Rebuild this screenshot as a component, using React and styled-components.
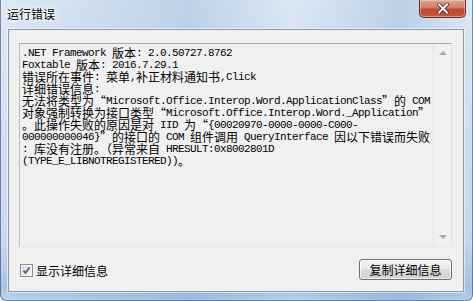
import styled, { createGlobalStyle } from 'styled-components'

const GlobalStyle = createGlobalStyle`
  html, body {
    margin: 0;
    padding: 0;
    overflow: hidden;
    background: #ffffff;
  }
`

const Window = styled.div`
  width: 473px;
  height: 301px;
  box-sizing: border-box;
  display: flex;
  flex-direction: column;
  border: 1px solid rgba(40, 60, 90, 0.55);
  border-top: none;
  border-radius: 0 0 6px 6px;
  background:
    linear-gradient(90deg, rgba(255,255,255,0.25) 0%, rgba(150,180,215,0.35) 40%, rgba(255,255,255,0.2) 62%, rgba(140,170,210,0.3) 85%, rgba(255,255,255,0.2) 100%),
    linear-gradient(180deg, #d3e1f1 0%, #c6d8ed 40%, #b7cde8 80%, #8fb0da 96%, #a9c3e3 100%);
  font-family: "Noto Sans CJK SC", "Liberation Sans", sans-serif;
`

const TitleBar = styled.div`
  height: 29px;
  flex: none;
  display: flex;
  justify-content: space-between;
  align-items: flex-start;
`

const Title = styled.div`
  padding: 6px 0 0 6px;
  font-size: 12px;
  line-height: 16px;
  color: #000;
  text-shadow: 0 0 6px #fff, 0 0 4px #fff, 0 0 2px #fff;
`

const CloseButton = styled.div`
  width: 45px;
  height: 17px;
  margin-right: 6px;
  display: flex;
  align-items: center;
  justify-content: center;
  border: 1px solid #6b2a24;
  border-top: none;
  border-radius: 0 0 5px 5px;
  background: linear-gradient(180deg, #e0a595 0%, #d27b68 45%, #c04a33 55%, #c7553b 100%);
  box-shadow: inset 0 0 0 1px rgba(255, 220, 210, 0.45);
`

const Client = styled.div`
  flex: 1;
  margin: 0 8px 8px 7px;
  display: flex;
  flex-direction: column;
  padding: 13px 11px 11px 10px;
  background: #f0f0f0;
  border: 1px solid #8a9aae;
  box-shadow: 0 0 0 1px rgba(255, 255, 255, 0.55);
`

const TextBox = styled.div`
  height: 204px;
  box-sizing: border-box;
  display: flex;
  border: 1px solid;
  border-color: #a3a6ab #dfe2e7 #e3e6ea #b8bbc0;
  background: #f0f0f0;
`

const TextContent = styled.div`
  flex: 1;
  padding: 3px 0 0 2px;
  color: #000;
`

const Line = styled.div`
  height: 12px;
  display: flex;
  align-items: center;
  white-space: pre;
`

const Latin = styled.span`
  font-family: "Liberation Mono", "DejaVu Sans Mono", monospace;
  font-size: 11px;
  letter-spacing: -0.6px;
  line-height: 12px;
`

const Cjk = styled.span`
  font-family: "Noto Sans CJK SC", sans-serif;
  font-size: 12px;
  line-height: 12px;
`

const Quote = styled.span`
  display: inline-block;
  width: 12px;
  font-family: "Noto Sans CJK SC", sans-serif;
  font-size: 12px;
  line-height: 12px;
  text-align: ${p => (p.$open ? 'right' : 'left')};
`

const ScrollBar = styled.div`
  width: 17px;
  display: flex;
  flex-direction: column;
  justify-content: space-between;
  align-items: center;
  padding: 7px 0 7px;
  border-left: 1px solid #e4e4e4;
  background: #f1f1f1;
`

const Arrow = styled.div`
  width: 0;
  height: 0;
  border-left: 4px solid transparent;
  border-right: 4px solid transparent;
  ${p => (p.$down
    ? 'border-top: 4px solid #a8a8a8;'
    : 'border-bottom: 4px solid #a8a8a8;')}
`

const Footer = styled.div`
  margin-top: 12px;
  height: 21px;
  display: flex;
  justify-content: space-between;
  align-items: center;
`

const CheckLabel = styled.label`
  display: flex;
  align-items: center;
  gap: 3px;
  padding: 1px 0 0 1px;
  font-size: 12px;
  color: #000;
`

const CheckBox = styled.span`
  width: 11px;
  height: 11px;
  display: flex;
  align-items: center;
  justify-content: center;
  border: 1px solid #8f8f8f;
  background: linear-gradient(135deg, #d6d6d6 0%, #f2f2f2 80%);
  box-shadow: inset 0 0 0 1px #f4f4f4;
`

const Button = styled.div`
  width: 91px;
  height: 19px;
  display: flex;
  align-items: center;
  justify-content: center;
  border: 1px solid #707070;
  border-radius: 3px;
  background: linear-gradient(180deg, #f2f2f2 0%, #ebebeb 49%, #dddddd 50%, #cfcfcf 100%);
  box-shadow: inset 0 0 0 1px rgba(255, 255, 255, 0.7);
  font-size: 12px;
  color: #000;
`

const lines = [
  '.NET Framework 版本: 2.0.50727.8762',
  'Foxtable 版本: 2016.7.29.1',
  '错误所在事件: 菜单,补正材料通知书,Click',
  '详细错误信息:',
  '无法将类型为“Microsoft.Office.Interop.Word.ApplicationClass”的 COM',
  '对象强制转换为接口类型“Microsoft.Office.Interop.Word._Application”',
  '。此操作失败的原因是对 IID 为“{00020970-0000-0000-C000-',
  '000000000046}”的接口的 COM 组件调用 QueryInterface 因以下错误而失败',
  ': 库没有注册。（异常来自 HRESULT:0x8002801D',
  '(TYPE_E_LIBNOTREGISTERED))。'
]

// split a line into runs so latin text is 6px wide and CJK text 12px wide
function MixedText ({ text }) {
  const parts = text.split(/([“”]|[\u3000-\u303f\u4e00-\u9fff\uff00-\uffef]+)/)
  return parts.map((part, idx) => {
    if (!part) return null
    if (part === '“' || part === '”') {
      return <Quote key={idx} $open={part === '“'}>{part}</Quote>
    }
    if (idx % 2 === 1) return <Cjk key={idx}>{part}</Cjk>
    return <Latin key={idx}>{part}</Latin>
  })
}

export default function App () {
  return (
    <>
      <GlobalStyle />
      <Window>
        <TitleBar>
          <Title>运行错误</Title>
          <CloseButton>
            <svg width='12' height='11' viewBox='0 0 12 11'>
              <path d='M2 1.5 L10 9.5 M10 1.5 L2 9.5' stroke='#4a1a14' strokeWidth='3.6' strokeLinecap='square' />
              <path d='M2 1.5 L10 9.5 M10 1.5 L2 9.5' stroke='#ffffff' strokeWidth='2' strokeLinecap='square' />
            </svg>
          </CloseButton>
        </TitleBar>
        <Client>
          <TextBox>
            <TextContent>
              {lines.map((l, idx) => (
                <Line key={idx}><MixedText text={l} /></Line>
              ))}
            </TextContent>
            <ScrollBar>
              <Arrow />
              <Arrow $down />
            </ScrollBar>
          </TextBox>
          <Footer>
            <CheckLabel>
              <CheckBox>
                <svg width='9' height='9' viewBox='0 0 9 9'>
                  <path d='M1.5 4.5 L3.5 7 L7.5 1.5' stroke='#4d5f86' strokeWidth='1.8' fill='none' />
                </svg>
              </CheckBox>
              显示详细信息
            </CheckLabel>
            <Button>复制详细信息</Button>
          </Footer>
        </Client>
      </Window>
    </>
  )
}
